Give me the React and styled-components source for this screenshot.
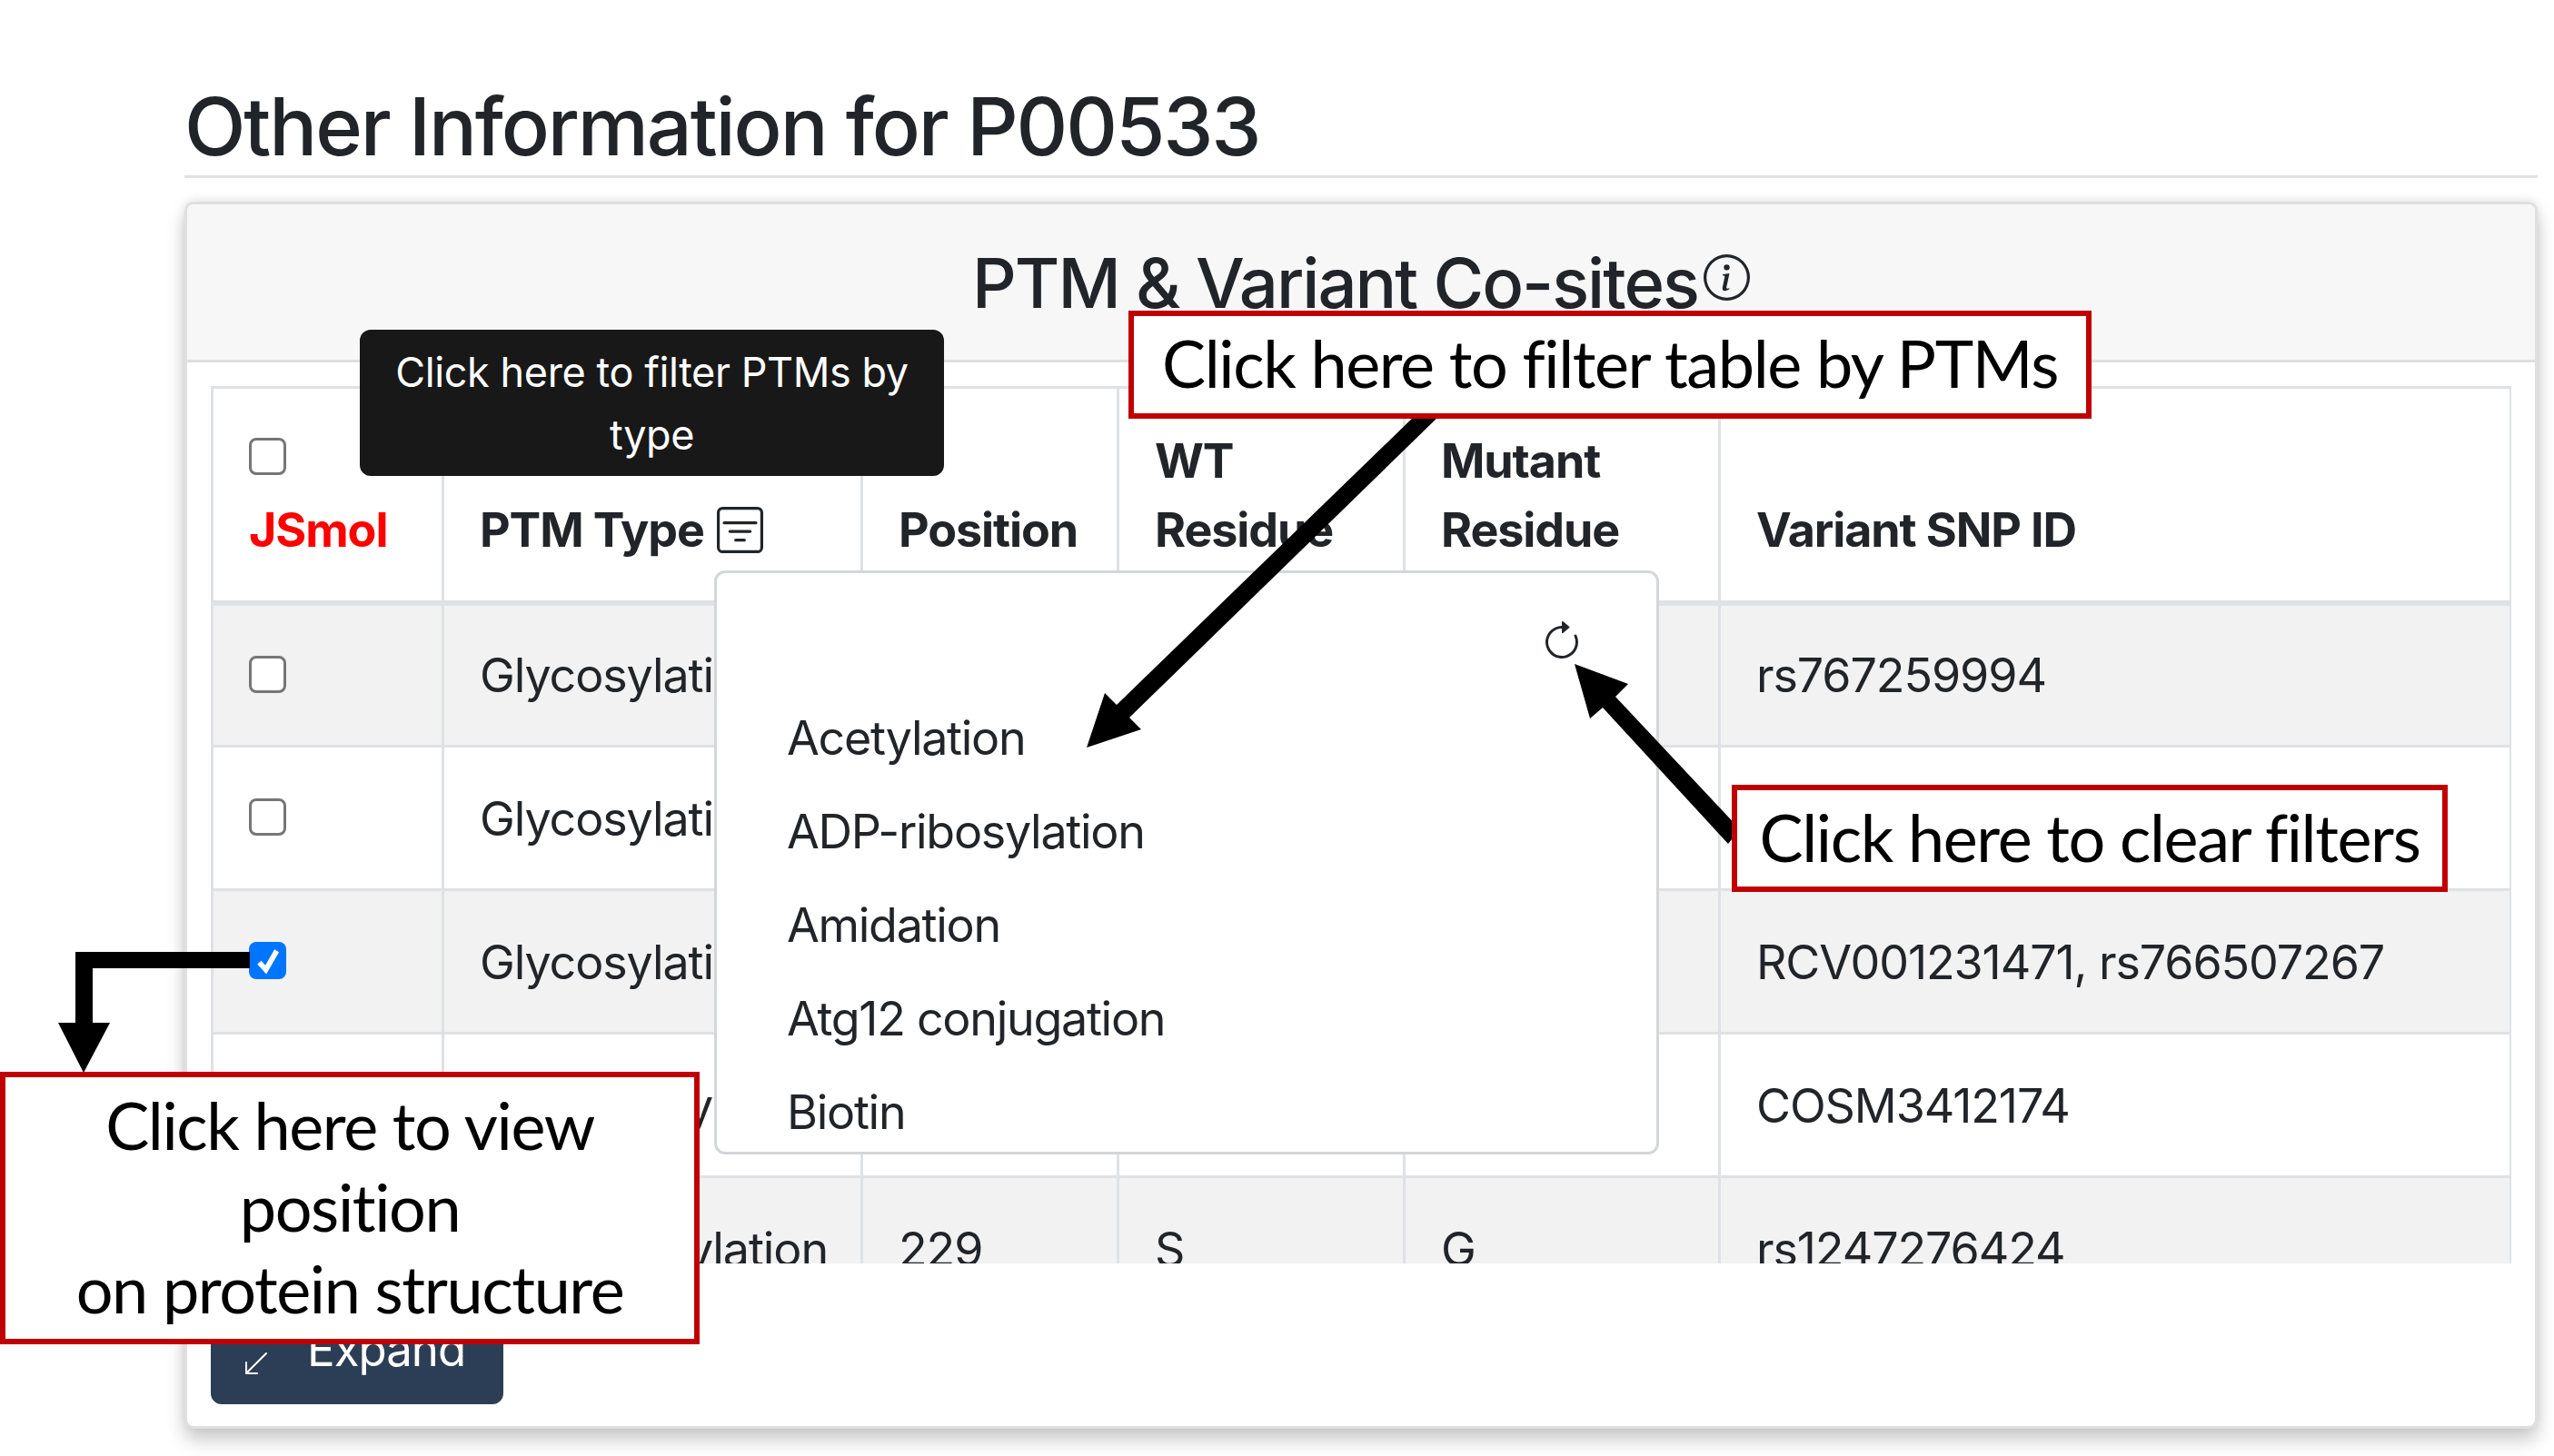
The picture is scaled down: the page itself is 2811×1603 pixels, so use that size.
import React from 'react';
import styled, { createGlobalStyle } from 'styled-components';
import { BsArrowClockwise, BsArrowDownLeft, BsFilterSquare, BsInfoCircle } from 'react-icons/bs';

const GlobalStyle = createGlobalStyle`
  html, body {
    margin: 0;
    background: #fff;
  }
  body {
    font-family: Inter, 'Liberation Sans', sans-serif;
    color: #212529;
  }
`;

const Page = styled.div`
  position: relative;
  width: 2811px;
  height: 1603px;
  overflow: hidden;
  box-sizing: border-box;
  padding: 84px 18px 0 203px;
`;

const PageTitle = styled.h2`
  margin: 0;
  height: 109px;
  font-size: 88px;
  line-height: 110px;
  font-weight: 500;
  letter-spacing: -2.1px;
  border-bottom: 3px solid #dee2e6;
`;

const Card = styled.section`
  margin-top: 26px;
  height: 1351px;
  box-sizing: border-box;
  border: 3px solid #dfdfdf;
  border-radius: 10px;
  background: #fff;
  box-shadow: 0 12px 20px rgba(0, 0, 0, 0.22), 0 -3px 10px rgba(0, 0, 0, 0.08);
`;

const CardHeader = styled.header`
  height: 171px;
  display: flex;
  align-items: center;
  justify-content: center;
  background: #f7f7f7;
  border-bottom: 3px solid #dfdfdf;
  border-radius: 8px 8px 0 0;
`;

const CardTitle = styled.h3`
  margin: 0;
  display: flex;
  align-items: center;
  font-size: 76px;
  line-height: 90px;
  font-weight: 500;
  letter-spacing: -2px;
`;

const InfoIcon = styled(BsInfoCircle)`
  font-size: 51px;
  margin: -10px 0 0 6px;
`;

const CardBody = styled.div`
  padding: 26px 26px 0 26px;
`;

const TableScroll = styled.div`
  height: 966px;
  overflow: hidden;
`;

const Table = styled.table`
  width: 2530px;
  table-layout: fixed;
  border-collapse: collapse;
  font-size: 52px;
  line-height: 76px;
  letter-spacing: -1.1px;
`;

const Th = styled.th`
  box-sizing: border-box;
  height: 237px;
  padding: 0 0 39px 39px;
  vertical-align: bottom;
  text-align: left;
  font-weight: 700;
  font-size: 52px;
  color: ${props => props.$red ? '#ff0000' : '#212529'};
  border: 3px solid #dee2e6;
  border-bottom-width: 6px;
`;

const Tr = styled.tr`
  background: ${props => props.$striped ? '#f2f2f2' : '#fff'};
`;

const Td = styled.td`
  box-sizing: border-box;
  height: 158px;
  padding: 2px 0 0 39px;
  white-space: nowrap;
  overflow: hidden;
  border: 3px solid #dee2e6;
`;

const CheckBox = styled.span`
  box-sizing: border-box;
  display: flex;
  align-items: center;
  justify-content: center;
  width: 41px;
  height: 41px;
  margin-bottom: ${props => props.$head ? '23px' : '4px'};
  border-radius: 8px;
  background: ${props => props.$checked ? '#0075ff' : '#fff'};
  border: ${props => props.$checked ? 'none' : '3px solid #767676'};
`;

const FilterIcon = styled(BsFilterSquare)`
  font-size: 51px;
  margin-left: 14px;
  vertical-align: -7px;
`;

const ExpandButton = styled.button`
  display: flex;
  align-items: center;
  width: 322px;
  height: 122px;
  margin-top: 33px;
  padding: 0 0 0 34px;
  border: none;
  border-radius: 12px;
  background: #2c3e55;
  color: #fff;
  font: 400 51px Inter, 'Liberation Sans', sans-serif;
  letter-spacing: -1px;
`;

const ExpandIcon = styled(BsArrowDownLeft)`
  font-size: 32px;
  margin: 32px 40px 0 0;
`;

const Tooltip = styled.div`
  position: absolute;
  left: 396px;
  top: 363px;
  width: 643px;
  height: 161px;
  box-sizing: border-box;
  padding: 12px 20px;
  border-radius: 12px;
  background: #181818;
  color: #fff;
  font-size: 45px;
  line-height: 69px;
  letter-spacing: -0.4px;
  text-align: center;
`;

const Popover = styled.div`
  position: absolute;
  left: 786px;
  top: 628px;
  width: 1040px;
  height: 643px;
  box-sizing: border-box;
  padding: 52px 80px 0 77px;
  background: #fff;
  border: 3px solid #d4d6d8;
  border-radius: 12px;
`;

const ResetRow = styled.div`
  display: flex;
  justify-content: flex-end;
  height: 78px;
  font-size: 48px;
`;

const FilterList = styled.ul`
  margin: 0;
  padding: 0;
  list-style: none;
  font-size: 52px;
  line-height: 103px;
  letter-spacing: -1.3px;
`;

const Annotations = styled.svg`
  position: absolute;
  left: 0;
  top: 0;
  width: 2811px;
  height: 1603px;
`;

const Callout = styled.div`
  position: absolute;
  box-sizing: border-box;
  display: flex;
  align-items: center;
  justify-content: center;
  padding-bottom: 5px;
  background: #fff;
  border: 6px solid #c00000;
  color: #000;
  font-family: Lato, 'Open Sans', sans-serif;
  font-size: 72px;
  line-height: 90px;
  letter-spacing: -1.4px;
  text-align: center;
`;

const FilterCallout = styled(Callout)`
  left: 1242px;
  top: 342px;
  width: 1060px;
  height: 119px;
`;

const ClearCallout = styled(Callout)`
  left: 1906px;
  top: 864px;
  width: 788px;
  height: 118px;
`;

const PositionCallout = styled(Callout)`
  left: 0;
  top: 1180px;
  width: 770px;
  height: 300px;
`;

const rows = [
  { ptm: 'Glycosylation', snp: 'rs767259994' },
  { ptm: 'Glycosylation', snp: '' },
  { ptm: 'Glycosylation', snp: 'RCV001231471, rs766507267', checked: true },
  { ptm: 'Phosphorylation', snp: 'COSM3412174' },
  { ptm: 'Phosphorylation', position: '229', wt: 'S', mutant: 'G', snp: 'rs1247276424' },
];

const filters = ['Acetylation', 'ADP-ribosylation', 'Amidation', 'Atg12 conjugation', 'Biotin'];

export default function App() {
  return (
    <Page>
      <GlobalStyle />
      <PageTitle>Other Information for P00533</PageTitle>
      <Card>
        <CardHeader>
          <CardTitle>PTM &amp; Variant Co-sites<InfoIcon /></CardTitle>
        </CardHeader>
        <CardBody>
          <TableScroll>
            <Table>
              <colgroup>
                <col style={{ width: 254 }} />
                <col style={{ width: 461 }} />
                <col style={{ width: 282 }} />
                <col style={{ width: 315 }} />
                <col style={{ width: 347 }} />
                <col style={{ width: 871 }} />
              </colgroup>
              <thead>
                <tr>
                  <Th $red><CheckBox $head />JSmol</Th>
                  <Th>PTM Type<FilterIcon /></Th>
                  <Th>Position</Th>
                  <Th>WT<br />Residue</Th>
                  <Th>Mutant<br />Residue</Th>
                  <Th>Variant SNP ID</Th>
                </tr>
              </thead>
              <tbody>
                {rows.map((row, i) => (
                  <Tr key={i} $striped={i % 2 === 0}>
                    <Td>
                      <CheckBox $checked={row.checked}>
                        {row.checked && (
                          <svg width="32" height="32" viewBox="0 0 20 20">
                            <path d="M4 11l4.500 5L16 3" fill="none" stroke="#fff" strokeWidth="3.600" />
                          </svg>
                        )}
                      </CheckBox>
                    </Td>
                    <Td>{row.ptm}</Td>
                    <Td>{row.position}</Td>
                    <Td>{row.wt}</Td>
                    <Td>{row.mutant}</Td>
                    <Td>{row.snp}</Td>
                  </Tr>
                ))}
              </tbody>
            </Table>
          </TableScroll>
          <ExpandButton><ExpandIcon />Expand</ExpandButton>
        </CardBody>
      </Card>

      <Popover>
        <ResetRow><BsArrowClockwise /></ResetRow>
        <FilterList>
          {filters.map(f => <li key={f}>{f}</li>)}
        </FilterList>
      </Popover>
      <Tooltip>Click here to filter PTMs by type</Tooltip>

      <Annotations viewBox="0 0 2811 1603">
        <polygon points="1560,455 1587,455 1243,790 1256,803 1196,823 1216,763 1229,776" fill="#000" />
        <polygon points="1733,731 1792,753 1778,767 1915,913 1902,929 1764,779 1750,791" fill="#000" />
        <polygon points="275,1048 83,1048 83,1126 64,1126 92,1181 121,1126 102,1126 102,1066 275,1066" fill="#000" />
      </Annotations>
      <FilterCallout>Click here to filter table by PTMs</FilterCallout>
      <ClearCallout>Click here to clear filters</ClearCallout>
      <PositionCallout>Click here to view<br />position<br />on protein structure</PositionCallout>
    </Page>
  );
}
